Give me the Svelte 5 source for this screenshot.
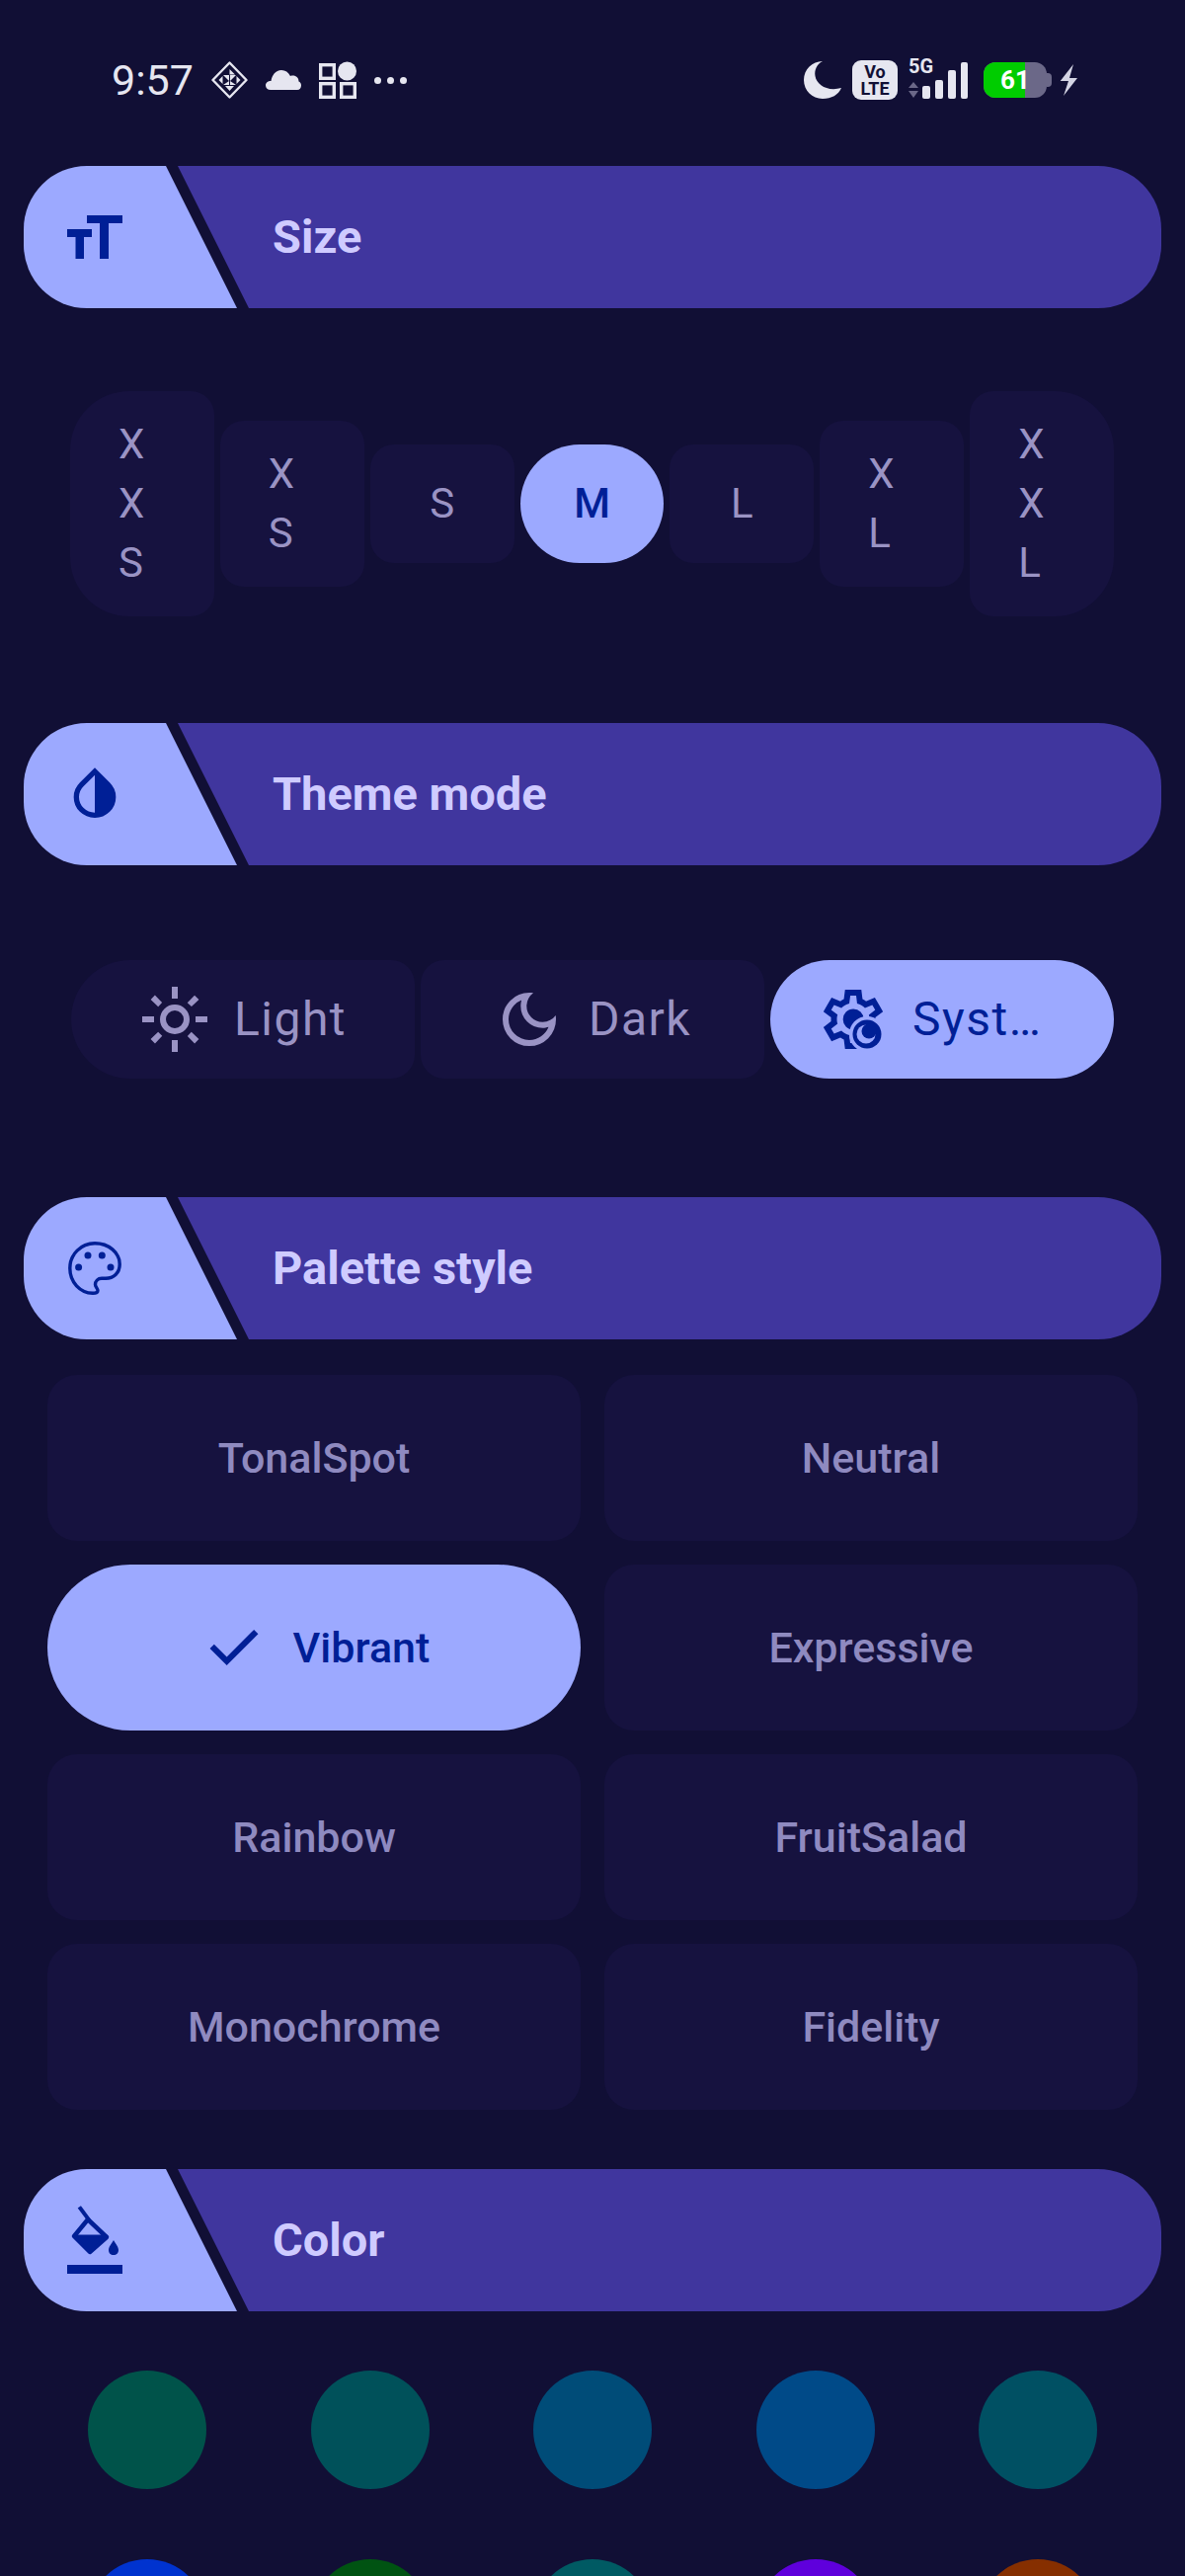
<script lang="ts">
  const sizes = ['XXS', 'XS', 'S', 'M', 'L', 'XL', 'XXL']
  const styles = ['TonalSpot', 'Neutral', 'Vibrant', 'Expressive', 'Rainbow', 'FruitSalad', 'Monochrome', 'Fidelity']
  const colors = [
    '#00534a', '#00515a', '#004c78', '#004a88', '#005063',
    '#0033cf', '#005312', '#005a63', '#5f00dc', '#862f00',
  ]
  const selectedSize = 'M'
  const selectedStyle = 'Vibrant'
</script>

{#snippet header(title)}
  <div class="hdr-title"><span>{title}</span></div>
{/snippet}

<div class="page">
  <div class="status">
    <div class="status-left">
      <span class="time">9:57</span>
      <svg width="37" height="38" viewBox="0 0 37 38" fill="none">
        <path d="M18.5 1.5 35.5 19 18.5 36.5 1.5 19Z" stroke="#e6e6f0" stroke-width="2.4" stroke-linejoin="round" />
        <path d="M18.5 8 L24 13.5 18.5 13.5Z M12 14 L18 14 18 20Z M19 14 L25 14 19 20Z M25.5 15 L29.5 19 25.5 23Z M11.5 15 L11.5 23 7.5 19Z M12 24 L18 20 18 24Z M19 20 L25 24 19 24Z M14 25 L23 25 18.5 30Z" fill="#e6e6f0" />
      </svg>
      <svg width="36" height="20" viewBox="0 0 36 20">
        <path d="M5 20C2 20 0 18 0 15.5 0 13 2 11 5.5 11 6.5 5 10 0 16 0c4 0 7 2 9 6 5-1.500 8.500 1.500 8.500 5.500 1.500.5 2.500 2 2.500 4 0 2.500-1.500 4.500-4 4.500Z" fill="#e6e6f0" />
      </svg>
      <svg width="38" height="38" viewBox="0 0 38 38" fill="none" stroke="#e6e6f0" stroke-width="3.4">
        <rect x="1.700" y="3.700" width="13.600" height="13.600" />
        <rect x="1.700" y="22.700" width="13.600" height="13.600" />
        <rect x="22.700" y="22.700" width="13.600" height="13.600" />
        <circle cx="28.500" cy="10" r="9.500" fill="#e6e6f0" stroke="none" />
      </svg>
      <div class="dots"><i></i><i></i><i></i></div>
    </div>
    <div class="status-right">
      <svg class="s-moon" width="38" height="38" viewBox="0 0 38 38">
        <path d="M19 0C13 3 10.500 9 11.500 15 13 24 24 31 38 27 35 34 28 38 19 38 8.500 38 0 29.500 0 19 0 8.500 8.500 0 19 0Z" fill="#e6e6f0" />
      </svg>
      <div class="volte"><span>Vo</span><span>LTE</span></div>
      <svg class="s-signal" width="60" height="44" viewBox="0 0 60 44">
        <text x="0" y="15" class="fiveg">5G</text>
        <path d="M5 24 10 30H0Z M0 33H10L5 40Z" fill="#6b6888" />
        <rect x="14" y="28" width="8" height="13" rx="2" fill="#e6e6f0" />
        <rect x="27" y="22" width="8" height="19" rx="2" fill="#e6e6f0" />
        <rect x="40" y="12" width="8" height="29" rx="2" fill="#e6e6f0" />
        <rect x="53" y="4" width="7" height="37" rx="2" fill="#e6e6f0" />
      </svg>
      <div class="battery">
        <div class="batt-body">
          <div class="batt-fill"></div>
          <span>61</span>
        </div>
        <div class="batt-nib"></div>
      </div>
      <svg class="s-bolt" width="18" height="32" viewBox="0 0 18 32">
        <path d="M14 0 .7 17 9 17 4 32 18 14 10 14Z" fill="#d4d4e4" />
      </svg>
    </div>
  </div>

  <section class="hdr">
    <div class="hdr-icon">
      <svg width="72" height="72" viewBox="0 0 72 72" fill="#001f96">
        <path d="M28 14H64V22H50V58H41V22H28Z" />
        <path d="M8 28H33V36H25V58H16.500V36H8Z" />
      </svg>
    </div>
    {@render header('Size')}
  </section>

  <div class="size-row">
    {#each sizes as s, i}
      <button class="seg" class:first={i === 0} class:last={i === sizes.length - 1} class:on={s === selectedSize}>
        <span>{s}</span>
      </button>
    {/each}
  </div>

  <section class="hdr">
    <div class="hdr-icon">
      <svg width="64" height="64" viewBox="0 -960 960 960" fill="#001f96">
        <path d="M480-120q-133 0-226.500-92T160-436q0-66 25-122t69-100l226-222 226 222q44 44 69 100t25 122q0 131-93.500 223.500T480-120Zm0-80v-568L310-600q-35 33-52.500 74.500T240-436q0 97 70 166.500T480-200Z" />
      </svg>
    </div>
    {@render header('Theme mode')}
  </section>

  <div class="theme-row">
    <button class="mode first">
      <svg width="72" height="72" viewBox="0 -960 960 960" fill="currentColor">
        <path d="M480-360q50 0 85-35t35-85q0-50-35-85t-85-35q-50 0-85 35t-35 85q0 50 35 85t85 35Zm0 80q-83 0-141.500-58.500T280-480q0-83 58.500-141.500T480-680q83 0 141.500 58.500T680-480q0 83-58.500 141.500T480-280ZM200-440H40v-80h160v80Zm720 0H760v-80h160v80ZM440-760v-160h80v160h-80Zm0 720v-160h80v160h-80ZM256-650l-101-97 57-59 96 100-52 56Zm492 496-97-101 53-55 101 97-57 59Zm-98-550 97-101 59 57-100 96-56-52ZM154-212l101-97 55 53-97 101-59-57Z" />
      </svg>
      <span>Light</span>
    </button>
    <button class="mode">
      <svg width="72" height="72" viewBox="0 -960 960 960" fill="currentColor">
        <path d="M480-120q-150 0-255-105T120-480q0-150 105-255t255-105q14 0 27.500 1t26.500 3q-41 29-65.500 75.500T444-660q0 90 63 153t153 63q55 0 101-24.500t75-65.500q2 13 3 26.500t1 27.500q0 150-105 255T480-120Zm0-80q88 0 158-48.500T740-375q-20 5-40 8t-40 3q-123 0-209.500-86.500T364-660q0-20 3-40t8-40q-78 32-126.500 102T200-480q0 116 82 198t198 82Z" />
      </svg>
      <span>Dark</span>
    </button>
    <button class="mode on">
      <svg width="72" height="72" viewBox="0 0 72 72">
        <g transform="scale(0.075) translate(0 960)">
          <path fill="#001f96" d="m370-80-16-128q-13-5-24.500-12T307-235l-119 50L78-375l103-78q-1-7-1-13.500v-27q0-6.500 1-13.500L78-585l110-190 119 50q11-8 23-15t24-12l16-128h220l16 128q13 5 24.500 12t22.500 15l119-50 110 190-103 78q1 7 1 13.500v27q0 6.500-2 13.500l103 78-110 190-118-50q-11 8-23 15t-24 12L590-80H370Zm70-80h79l14-106q31-8 57.500-23.500T639-327l99 41 39-68-86-65q5-14 7-29.500t2-31.500q0-16-2-31.500t-7-29.500l86-65-39-68-99 42q-22-23-48.500-38.500T533-694l-13-106h-79l-14 106q-31 8-57.500 23.500T321-633l-99-41-39 68 86 64q-5 15-7 30t-2 32q0 16 2 31t7 30l-86 65 39 68 99-42q22 23 48.500 38.500T427-266l13 106Zm42-180q58 0 99-41t41-99q0-58-41-99t-99-41q-59 0-99.500 41T342-480q0 58 40.500 99t99.500 41Z" />
        </g>
        <circle cx="50" cy="51" r="18" fill="#9ca9ff" />
        <circle cx="50" cy="51" r="14.500" fill="#001f96" />
        <circle cx="49" cy="51" r="9.500" fill="#9ca9ff" />
        <circle cx="52" cy="48" r="7.500" fill="#001f96" />
      </svg>
      <span>System</span>
    </button>
  </div>

  <section class="hdr">
    <div class="hdr-icon">
      <svg width="54" height="54" viewBox="0 0 54 54" fill="none">
        <path d="M25 52.300C12 52 1.800 41 1.800 27 1.800 13 13 1.800 27 1.800 41 1.800 52.200 11 52.200 23 52.200 32 46 37.300 38 37.300H34C30 37.300 27.500 40 27.500 43.500 27.500 46 30 47.500 30 49.500 30 51.500 28 52.300 25 52.300Z" stroke="#001f96" stroke-width="3.400" />
        <circle cx="20" cy="14" r="3.500" fill="#001f96" />
        <circle cx="34.300" cy="14" r="3.500" fill="#001f96" />
        <circle cx="10.600" cy="26" r="3.500" fill="#001f96" />
        <circle cx="43" cy="26" r="3.500" fill="#001f96" />
      </svg>
    </div>
    {@render header('Palette style')}
  </section>

  <div class="style-grid">
    {#each styles as s}
      <button class="style" class:on={s === selectedStyle}>
        {#if s === selectedStyle}
          <svg width="72" height="72" viewBox="0 -960 960 960" fill="currentColor">
            <path d="M382-240 154-468l57-57 171 171 367-367 57 57-424 424Z" />
          </svg>
        {/if}
        <span>{s}</span>
      </button>
    {/each}
  </div>

  <section class="hdr">
    <div class="hdr-icon">
      <svg width="72" height="72" viewBox="0 0 72 72" fill="none">
        <path d="M21.500 4 29 14" stroke="#001f96" stroke-width="4" stroke-linecap="square" />
        <path d="M29 15 48 33 31 48 15 32Z" stroke="#001f96" stroke-width="4.500" stroke-linejoin="round" />
        <path d="M15 32H48L31 48Z" fill="#001f96" stroke="#001f96" stroke-width="3" stroke-linejoin="round" />
        <path d="M55 36C58 41 60 43 60 46 60 49 58 51 55 51 52 51 50 49 50 46 50 43 52 41 55 36Z" fill="#001f96" />
        <rect x="8" y="61" width="56" height="9" fill="#001f96" />
      </svg>
    </div>
    {@render header('Color')}
  </section>

  <div class="swatches">
    {#each colors as c}
      <div class="swatch" style="background:{c}"></div>
    {/each}
  </div>
</div>

<style>
  :global(body) {
    background: #110f35;
    font-family: Roboto, sans-serif;
  }
  .page {
    height: 2608px;
    overflow: hidden;
    background: #110f35;
  }

  /* status bar */
  .status {
    height: 168px;
    box-sizing: border-box;
    padding: 59px 109px 0 113px;
    display: flex;
    justify-content: space-between;
    align-items: flex-start;
    color: #e6e6f0;
  }
  .status-left,
  .status-right {
    height: 44px;
    display: flex;
    align-items: center;
  }
  .status-left {
    gap: 18px;
  }
  .time {
    font-size: 43px;
    line-height: 44px;
  }
  .dots {
    display: flex;
    gap: 6px;
  }
  .dots i {
    width: 7px;
    height: 7px;
    border-radius: 50%;
    background: #e6e6f0;
  }
  .volte {
    width: 46px;
    height: 40px;
    margin-left: 11px;
    border-radius: 9px;
    background: #e6e6f0;
    color: #110f35;
    font-weight: 700;
    font-size: 18px;
    line-height: 17px;
    display: flex;
    flex-direction: column;
    align-items: center;
    justify-content: center;
  }
  .s-signal {
    margin-left: 11px;
    overflow: visible;
  }
  .fiveg {
    font-family: Roboto, sans-serif;
    font-weight: 700;
    font-size: 20px;
    fill: #e6e6f0;
  }
  .battery {
    display: flex;
    align-items: center;
    margin-left: 16px;
  }
  .batt-body {
    position: relative;
    width: 64px;
    height: 36px;
    border-radius: 12px;
    overflow: hidden;
    background: #6b6888;
    display: flex;
    align-items: center;
    justify-content: center;
  }
  .batt-fill {
    position: absolute;
    left: 0;
    top: 0;
    bottom: 0;
    width: 42px;
    background: #00cc00;
  }
  .batt-body span {
    position: relative;
    color: #fff;
    font-weight: 700;
    font-size: 26px;
  }
  .batt-nib {
    width: 5px;
    height: 14px;
    border-radius: 0 4px 4px 0;
    background: #6b6888;
  }
  .s-bolt {
    margin-left: 8px;
  }

  /* section header */
  .hdr {
    margin: 0 24px;
    height: 144px;
    display: flex;
  }
  .hdr-icon {
    width: 216px;
    flex: none;
    box-sizing: border-box;
    display: flex;
    align-items: center;
    background: #9ca9ff;
    border-radius: 64px 0 0 64px;
    clip-path: polygon(0 0, 144px 0, 216px 100%, 0 100%);
  }
  .hdr-icon svg {
    margin-left: calc(72px - var(--w, 0px));
    flex: none;
  }
  .hdr-icon svg[width='72'] { --w: 36px; }
  .hdr-icon svg[width='64'] { --w: 32px; }
  .hdr-icon svg[width='54'] { --w: 27px; }
  .hdr-title {
    flex: 1;
    margin-left: -60px;
    padding: 0 0 2px 96px;
    display: flex;
    align-items: center;
    background: #40369e;
    border-radius: 0 64px 64px 0;
    clip-path: polygon(0 0, 100% 0, 100% 100%, 72px 100%);
    color: #cfcbff;
    font-weight: 700;
    font-size: 47px;
  }

  /* size selector */
  .size-row {
    display: flex;
    align-items: center;
    gap: 6px;
    margin: 84px 72px 108px 71px;
  }
  button {
    font-family: Roboto, sans-serif;
    border: none;
    padding: 0;
    margin: 0;
    background: #16123f;
    color: #9a93c4;
  }
  .seg {
    flex: 1 1 0;
    min-width: 0;
    min-height: 120px;
    box-sizing: border-box;
    padding: 24px 49px;
    border-radius: 24px;
    display: flex;
    align-items: center;
    justify-content: center;
    font-size: 42px;
    line-height: 60px;
  }
  .seg span {
    word-break: break-all;
    text-align: left;
  }
  .seg.first {
    border-radius: 60px 24px 24px 60px;
  }
  .seg.last {
    border-radius: 24px 60px 60px 24px;
  }
  .seg.on {
    border-radius: 60px;
    background: #9ca9ff;
    color: #001f96;
    font-weight: 500;
  }

  /* theme mode */
  .theme-row {
    display: flex;
    gap: 6px;
    margin: 96px 72px 120px;
  }
  .mode {
    flex: 1 1 0;
    min-width: 0;
    height: 120px;
    box-sizing: border-box;
    padding: 0 48px;
    border-radius: 24px;
    display: flex;
    align-items: center;
    justify-content: center;
    gap: 24px;
    font-size: 48px;
    letter-spacing: 1.5px;
  }
  .mode svg {
    flex: none;
  }
  .mode span {
    min-width: 0;
    padding-bottom: 2px;
    overflow: hidden;
    white-space: nowrap;
    text-overflow: ellipsis;
  }
  .mode.first {
    border-radius: 60px 24px 24px 60px;
  }
  .mode.on {
    border-radius: 60px;
    background: #9ca9ff;
    color: #001f96;
  }

  /* palette style */
  .style-grid {
    display: grid;
    grid-template-columns: 1fr 1fr;
    gap: 24px;
    margin: 36px 48px 60px;
  }
  .style {
    height: 168px;
    border-radius: 30px;
    display: flex;
    align-items: center;
    justify-content: center;
    gap: 24px;
    font-size: 43px;
    font-weight: 500;
    color: #8f8ac0;
  }
  .style.on {
    border-radius: 84px;
    background: #9ca9ff;
    color: #001f96;
  }

  /* color swatches */
  .swatches {
    display: grid;
    grid-template-columns: repeat(5, 1fr);
    row-gap: 71px;
    justify-items: center;
    margin: 60px 36px 0 36.5px;
  }
  .swatch {
    width: 120px;
    height: 120px;
    border-radius: 50%;
  }
</style>
